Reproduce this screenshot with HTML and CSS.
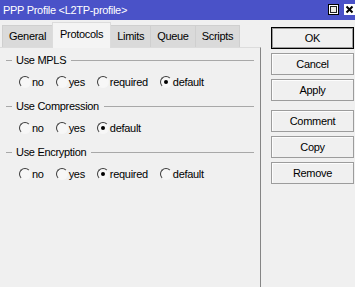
FILE: index.html
```html
<!DOCTYPE html>
<html>
<head>
<meta charset="utf-8">
<link rel="stylesheet" href="styles.css">
</head>
<body>
<div class="window">
  <div class="titlebar">
    <span class="title">PPP Profile &lt;L2TP-profile&gt;</span>
    <div class="tb-icons">
      <span class="tb-btn"><svg width="11" height="11" viewBox="0 0 11 11"><rect x="0.5" y="0.5" width="10" height="10" fill="#fff" stroke="#000"/><rect x="2.5" y="2.5" width="6" height="6" fill="#ecebe2" stroke="#222"/></svg></span>
      <span class="tb-btn"><svg width="11" height="11" viewBox="0 0 11 11"><rect x="0" y="0" width="11" height="11" fill="#fff"/><path d="M2.5 2.5 L8.5 8.5 M8.5 2.5 L2.5 8.5" stroke="#000" stroke-width="2"/></svg></span>
    </div>
  </div>
  <div class="main">
    <div class="left">
      <div class="tabs">
        <div class="tab">General</div>
        <div class="tab active">Protocols</div>
        <div class="tab">Limits</div>
        <div class="tab">Queue</div>
        <div class="tab">Scripts</div>
      </div>
      <div class="panel">
        <div class="group">
          <div class="legend"><span class="dash"></span><span class="ltext">Use MPLS</span><span class="line"></span></div>
          <div class="radios">
            <label class="radio"><span class="dot"></span>no</label>
            <label class="radio"><span class="dot"></span>yes</label>
            <label class="radio"><span class="dot"></span>required</label>
            <label class="radio"><span class="dot on"></span>default</label>
          </div>
        </div>
        <div class="group">
          <div class="legend"><span class="dash"></span><span class="ltext">Use Compression</span><span class="line"></span></div>
          <div class="radios">
            <label class="radio"><span class="dot"></span>no</label>
            <label class="radio"><span class="dot"></span>yes</label>
            <label class="radio"><span class="dot on"></span>default</label>
          </div>
        </div>
        <div class="group">
          <div class="legend"><span class="dash"></span><span class="ltext">Use Encryption</span><span class="line"></span></div>
          <div class="radios">
            <label class="radio"><span class="dot"></span>no</label>
            <label class="radio"><span class="dot"></span>yes</label>
            <label class="radio"><span class="dot on"></span>required</label>
            <label class="radio"><span class="dot"></span>default</label>
          </div>
        </div>
      </div>
    </div>
    <div class="right">
      <div class="btn default">OK</div>
      <div class="btn">Cancel</div>
      <div class="btn">Apply</div>
      <div class="btn sep">Comment</div>
      <div class="btn">Copy</div>
      <div class="btn">Remove</div>
    </div>
  </div>
</div>
</body>
</html>
```
FILE: styles.css
```css
html, body {
  margin: 0;
  padding: 0;
}
body {
  background: #f0f0f0;
  font-family: "Liberation Sans", Arial, sans-serif;
  font-size: 11px;
  letter-spacing: -0.3px;
  color: #000;
  width: 355px;
  height: 287px;
  overflow: hidden;
}
.titlebar {
  height: 20px;
  background: #4a52c8;
  display: flex;
  align-items: center;
  justify-content: space-between;
  padding: 0 0 0 3px;
}
.title {
  color: #fff;
  font-size: 11px;
  padding-bottom: 1px;
}
.tb-icons {
  display: flex;
  gap: 5px;
  padding-bottom: 1px;
}
.tb-btn {
  display: flex;
  width: 11px;
  height: 11px;
}
.main {
  display: flex;
  height: 267px;
}
.left {
  width: 261px;
  display: flex;
  flex-direction: column;
}
.tabs {
  display: flex;
  align-items: flex-end;
  padding-left: 2px;
  height: 27px;
}
.tab {
  box-sizing: border-box;
  height: 22px;
  line-height: 21px;
  padding: 0 6px;
  background: #dadada;
  border: 1px solid #cfcfcf;
  border-bottom: none;
  margin-right: -1px;
}
.tab.active {
  height: 26px;
  line-height: 22px;
  padding: 0 7px;
  background: #f4f4f4;
  border-color: #dcdcdc;
  position: relative;
  z-index: 1;
  margin-bottom: -1px;
}
.panel {
  flex: 1;
  border-top: 1px solid #dcdcdc;
  border-right: 1px solid #858585;
  padding: 4px 6px 0 6px;
}
.group {
  margin-bottom: 2px;
}
.legend {
  display: flex;
  align-items: center;
  height: 16px;
}
.dash {
  width: 6px;
  height: 1px;
  background: #a8a8a8;
}
.ltext {
  padding: 0 5px 0 4px;
}
.line {
  flex: 1;
  height: 1px;
  background: #a8a8a8;
}
.radios {
  display: flex;
  align-items: center;
  height: 28px;
  padding-left: 13px;
  gap: 12px;
}
.radio {
  display: flex;
  align-items: center;
  gap: 1px;
}
.dot {
  width: 10px;
  height: 10px;
  border-radius: 50%;
  border: 1px solid;
  border-color: #3c3c3c #f6f6f6 #f6f6f6 #3c3c3c;
  background: #f7f7f7;
  position: relative;
  box-sizing: content-box;
}
.dot.on::after {
  content: "";
  position: absolute;
  left: 3px;
  top: 3px;
  width: 4px;
  height: 4px;
  border-radius: 50%;
  background: #000;
}
.right {
  flex: 1;
  display: flex;
  flex-direction: column;
  padding: 7px 1px 0 10px;
  gap: 4px;
}
.btn {
  box-sizing: border-box;
  height: 22px;
  line-height: 20px;
  text-align: center;
  border: 1px solid #9c9c9c;
  background: #f0f0f0;
  box-shadow: inset 1px 1px 0 #fdfdfd;
}
.btn.default {
  border: 1px solid #000;
  box-shadow: inset 0 0 0 1px #9c9c9c;
}
.btn.sep {
  margin-top: 5px;
}
```
